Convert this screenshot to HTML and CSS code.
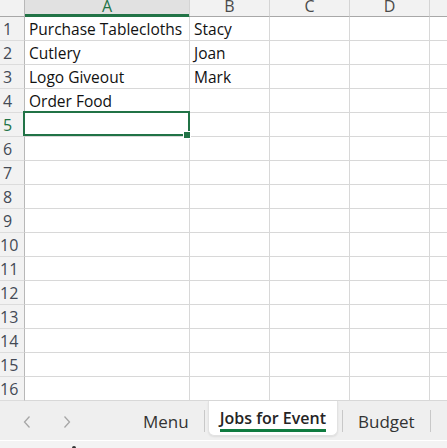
FILE: index.html
```html
<!DOCTYPE html>
<html>
<head>
<meta charset="utf-8">
<link rel="stylesheet" href="styles.css">
</head>
<body>
<div class="app">
  <div class="sheet">
    <div class="corner"></div>
    <div class="ch sel">A</div><div class="ch">B</div><div class="ch">C</div><div class="ch">D</div><div class="ch">E</div>

    <div class="rh">1</div><div class="c">Purchase Tablecloths</div><div class="c">Stacy</div><div class="c"></div><div class="c"></div><div class="c"></div>
    <div class="rh">2</div><div class="c">Cutlery</div><div class="c">Joan</div><div class="c"></div><div class="c"></div><div class="c"></div>
    <div class="rh">3</div><div class="c">Logo Giveout</div><div class="c">Mark</div><div class="c"></div><div class="c"></div><div class="c"></div>
    <div class="rh">4</div><div class="c">Order Food</div><div class="c"></div><div class="c"></div><div class="c"></div><div class="c"></div>
    <div class="rh rsel">5</div><div class="c active"><span class="selbox"></span><span class="handle"></span></div><div class="c"></div><div class="c"></div><div class="c"></div><div class="c"></div>
    <div class="rh">6</div><div class="c"></div><div class="c"></div><div class="c"></div><div class="c"></div><div class="c"></div>
    <div class="rh">7</div><div class="c"></div><div class="c"></div><div class="c"></div><div class="c"></div><div class="c"></div>
    <div class="rh">8</div><div class="c"></div><div class="c"></div><div class="c"></div><div class="c"></div><div class="c"></div>
    <div class="rh">9</div><div class="c"></div><div class="c"></div><div class="c"></div><div class="c"></div><div class="c"></div>
    <div class="rh">10</div><div class="c"></div><div class="c"></div><div class="c"></div><div class="c"></div><div class="c"></div>
    <div class="rh">11</div><div class="c"></div><div class="c"></div><div class="c"></div><div class="c"></div><div class="c"></div>
    <div class="rh">12</div><div class="c"></div><div class="c"></div><div class="c"></div><div class="c"></div><div class="c"></div>
    <div class="rh">13</div><div class="c"></div><div class="c"></div><div class="c"></div><div class="c"></div><div class="c"></div>
    <div class="rh">14</div><div class="c"></div><div class="c"></div><div class="c"></div><div class="c"></div><div class="c"></div>
    <div class="rh">15</div><div class="c"></div><div class="c"></div><div class="c"></div><div class="c"></div><div class="c"></div>
    <div class="rh">16</div><div class="c"></div><div class="c"></div><div class="c"></div><div class="c"></div><div class="c"></div>
  </div>

  <div class="tabbar">
    <div class="nav">
      <svg class="chev first" width="10" height="14" viewBox="0 0 10 14"><path d="M7.5 1.5 L2.5 7 L7.5 12.5" fill="none" stroke="#a6a6a6" stroke-width="1.3"/></svg>
      <svg class="chev" width="10" height="14" viewBox="0 0 10 14"><path d="M2.5 1.5 L7.5 7 L2.5 12.5" fill="none" stroke="#a6a6a6" stroke-width="1.3"/></svg>
    </div>
    <div class="tab">Menu</div>
    <div class="sep"></div>
    <div class="tab current"><span class="label">Jobs for Event</span></div>
    <div class="sep"></div>
    <div class="tab">Budget</div>
    <div class="sep"></div>
  </div>
  <div class="status"><span class="dot"></span></div>
</div>
</body>
</html>
```

FILE: styles.css
```css
html, body {
  margin: 0;
  padding: 0;
  background: #ffffff;
}

.app {
  width: 447px;
  height: 448px;
  overflow: hidden;
  font-family: "Open Sans", "Noto Sans", sans-serif;
}

.sheet {
  display: grid;
  grid-template-columns: 25px 165px 80px 80px 80px 80px;
  grid-template-rows: 17px repeat(16, 24px);
  width: 510px;
}

.corner {
  background: #f2f2f2;
  border-right: 1px solid #b8b8b8;
  border-bottom: 1px solid #a8a8a8;
}

.ch {
  background: #f2f2f2;
  border-right: 1px solid #d4d4d4;
  border-bottom: 1px solid #a8a8a8;
  font-size: 16px;
  line-height: 13px;
  text-align: center;
  color: #4a4a4a;
  overflow: hidden;
}

.ch.sel {
  background: #e1e1e1;
  color: #217346;
  box-shadow: inset 0 -2px #217346;
  border-bottom-color: #217346;
}

.rh {
  background: #f2f2f2;
  border-right: 1px solid #b8b8b8;
  border-bottom: 1px solid #dcdcdc;
  font-size: 16px;
  line-height: 24px;
  padding-right: 9px;
  text-align: center;
  color: #444a55;
  overflow: hidden;
  white-space: nowrap;
}

.rh.rsel {
  color: #217346;
}

.c {
  border-right: 1px solid #d8d8d8;
  border-bottom: 1px solid #d8d8d8;
  font-size: 15.5px;
  line-height: 24px;
  padding-left: 4px;
  color: #111111;
  white-space: nowrap;
  overflow: hidden;
}

.c.active {
  position: relative;
  overflow: visible;
}

.selbox {
  position: absolute;
  top: -2px;
  left: -2px;
  right: -1px;
  bottom: 0;
  border: 2px solid #217346;
  z-index: 2;
}

.handle {
  position: absolute;
  right: -2px;
  bottom: -3px;
  width: 6px;
  height: 6px;
  background: #217346;
  border: 1px solid #ffffff;
  z-index: 3;
}

.tabbar {
  height: 39px;
  background: #efefef;
  display: flex;
  align-items: flex-start;
}

.nav {
  width: 128px;
  height: 39px;
  display: flex;
  align-items: center;
  padding-left: 22px;
  box-sizing: border-box;
}

.chev {
  display: block;
  margin-top: 2px;
}

.chev.first {
  margin-right: 30px;
}

.tab {
  font-size: 17px;
  color: #333333;
  padding: 0 15px;
  line-height: 20px;
  margin-top: 11px;
  white-space: nowrap;
}

.tab.current {
  background: #ffffff;
  border: 1px solid #e2e2e2;
  border-top: none;
  border-radius: 0 0 6px 6px;
  box-shadow: 0 1px 2px rgba(0, 0, 0, 0.08);
  margin: 0 4px 0 3px;
  padding: 7px 11px 0 11px;
  height: 27px;
  font-size: 16px;
  font-weight: 600;
  color: #242424;
}

.tab.current .label {
  display: inline-block;
  line-height: 20px;
  padding-bottom: 1px;
  border-bottom: 3px solid #107c41;
}

.sep {
  width: 1px;
  height: 22px;
  margin-top: 9px;
  background: #c8c8c8;
}

.status {
  height: 8px;
  background: #f3f3f3;
  border-top: 1px solid #ffffff;
  position: relative;
}

.dot {
  position: absolute;
  left: 72px;
  top: 5px;
  width: 4px;
  height: 4px;
  border-radius: 50%;
  background: #333333;
}
```
